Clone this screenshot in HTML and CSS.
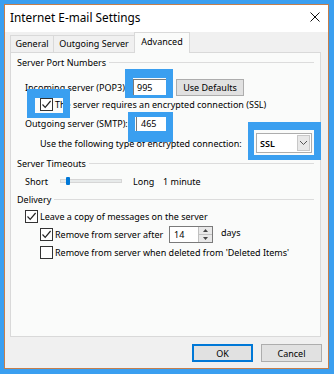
FILE: index.html
```html
<!DOCTYPE html>
<html>
<head>
<meta charset="utf-8">
<link rel="stylesheet" href="styles.css">
</head>
<body>
<div class="window">
  <div class="titlebar">
    <span class="title">Internet E-mail Settings</span>
    <svg class="close" width="10" height="10" viewBox="0 0 10 10"><path d="M0.5 0.5 L9.5 9.5 M9.5 0.5 L0.5 9.5" stroke="#111" stroke-width="1" fill="none"/></svg>
  </div>
  <div class="content">
    <div class="tabs">
      <div class="tab t-general">General</div>
      <div class="tab t-outgoing">Outgoing Server</div>
      <div class="tab t-advanced active">Advanced</div>
    </div>
    <div class="panel">
      <div class="group"><span>Server Port Numbers</span><i class="rule"></i></div>

      <div class="row r-in">
        <span class="lbl lbl-in">Incoming server (POP3):</span>
        <span class="field f-995">995</span>
        <span class="btn defaults">Use Defaults</span>
      </div>

      <div class="row r-ssl ind2">
        <span class="cb"><svg width="11" height="11" viewBox="0 0 11 11"><path d="M1.5 5.5 L4.2 8.3 L9.6 2" stroke="#222" stroke-width="1.2" fill="none"/></svg></span>
        <span class="cbtext">The server requires an encrypted connection (SSL)</span>
      </div>

      <div class="row r-out">
        <span class="lbl lbl-out">Outgoing server (SMTP):</span>
        <span class="field f-465">465</span>
      </div>

      <div class="row r-enc ind2">
        <span class="enc-lbl">Use the following type of encrypted connection:</span>
        <span class="select"><span class="sel-val">SSL</span><span class="sel-arrow"><svg width="9" height="6" viewBox="0 0 9 6"><path d="M1 1 L4.5 4.5 L8 1" stroke="#555" stroke-width="1" fill="none"/></svg></span></span>
      </div>

      <div class="group g2"><span>Server Timeouts</span><i class="rule"></i></div>

      <div class="row r-slider">
        <span class="short">Short</span>
        <span class="track"><span class="thumb"></span></span>
        <span class="long">Long</span>
        <span class="mins">1 minute</span>
      </div>

      <div class="group g3"><span>Delivery</span><i class="rule"></i></div>

      <div class="row r-leave">
        <span class="cb"><svg width="11" height="11" viewBox="0 0 11 11"><path d="M1.5 5.5 L4.2 8.3 L9.6 2" stroke="#222" stroke-width="1.2" fill="none"/></svg></span>
        <span class="cbtext">Leave a copy of messages on the server</span>
      </div>

      <div class="row r-after ind2">
        <span class="cb"><svg width="11" height="11" viewBox="0 0 11 11"><path d="M1.5 5.5 L4.2 8.3 L9.6 2" stroke="#222" stroke-width="1.2" fill="none"/></svg></span>
        <span class="cbtext after-lbl">Remove from server after</span>
        <span class="spin"><span class="spin-val">14</span><span class="spin-btns"><span class="sb"><svg width="5" height="3" viewBox="0 0 5 3"><path d="M0 3 L2.5 0 L5 3Z" fill="#444"/></svg></span><span class="sb"><svg width="5" height="3" viewBox="0 0 5 3"><path d="M0 0 L2.5 3 L5 0Z" fill="#444"/></svg></span></span></span>
        <span class="days">days</span>
      </div>

      <div class="row r-deleted ind2">
        <span class="cb"></span>
        <span class="cbtext">Remove from server when deleted from 'Deleted Items'</span>
      </div>
    </div>
    <div class="footer">
      <span class="btn ok">OK</span>
      <span class="btn cancel">Cancel</span>
    </div>
  </div>
</div>

<div class="hl hl1"></div>
<div class="hl hl2"></div>
<div class="hl hl3"></div>
<div class="hl hl4"></div>
</body>
</html>
```

FILE: styles.css
```css
* { box-sizing: border-box; }
html, body { margin: 0; padding: 0; }
body {
  width: 334px;
  height: 374px;
  overflow: hidden;
  position: relative;
  background: #3a9ff0;
  font-family: "Noto Sans", "Open Sans", sans-serif;
  font-size: 9px;
  color: #000;
}
.window {
  margin: 4px 0 0 4px;
  width: 325px;
  height: 365px;
  border: 1px solid #c47e4c;
  background: #f0f0f0;
  display: flex;
  flex-direction: column;
}
.titlebar {
  height: 27px;
  flex: none;
  background: #fff;
  display: flex;
  align-items: center;
  justify-content: space-between;
  padding: 0 8px 3px 5px;
}
.title { font-size: 11.8px; color: #000; }
.close { display: block; }

.content {
  flex: 1;
  display: flex;
  flex-direction: column;
  padding: 0 0 0 5px;
}
.tabs {
  height: 21px;
  display: flex;
  align-items: flex-end;
  margin-bottom: -1px;
  position: relative;
  z-index: 1;
}
.tab {
  height: 17px;
  margin-bottom: 1px;
  border: 1px solid #d9d9d9;
  border-bottom: none;
  background: #f0f0f0;
  display: flex;
  align-items: center;
  justify-content: center;
  padding-bottom: 1px;
}
.t-general { width: 44px; }
.t-outgoing { width: 82px; margin-left: -1px; }
.t-advanced { width: 56px; margin-left: -1px; }
.tab.active {
  height: 21px;
  margin-bottom: 0;
  background: #fafbfa;
  padding-bottom: 3px;
}

.panel {
  width: 311px;
  height: 285px;
  flex: none;
  border: 1px solid #d9d9d9;
  background: #fafbfa;
  padding: 1px 6px 0 6px;
}
.group {
  height: 16px;
  display: flex;
  align-items: center;
}
.rule {
  flex: 1;
  height: 1px;
  background: #dcdcdc;
  margin-left: 3px;
  margin-top: 1px;
}
.g2, .g3 { margin-top: 2px; }

.row {
  display: flex;
  align-items: center;
  height: 16px;
}
.ind2 { padding-left: 23px; }

.r-in { height: 18px; margin-top: 8px; padding-left: 8px; }
.lbl-in { width: 108px; }
.field {
  height: 17px;
  background: #fff;
  border: 1px solid #7a7a7a;
  display: flex;
  align-items: center;
  padding-left: 3px;
}
.f-995 { width: 34px; }
.btn {
  display: flex;
  align-items: center;
  justify-content: center;
  background: #e1e1e1;
  border: 1px solid #adadad;
}
.defaults { width: 68px; height: 17px; margin-left: 9px; }

.r-ssl { margin-top: 0; }
.cb {
  width: 13px;
  height: 13px;
  flex: none;
  border: 1px solid #333;
  background: #fff;
  display: flex;
  align-items: center;
  justify-content: center;
}
.cb svg { display: block; }
.cbtext { margin-left: 2px; }

.r-out { height: 18px; margin-top: 2px; padding-left: 8px; }
.lbl-out { width: 111px; }
.f-465 { width: 31px; padding-left: 4px; }

.r-enc { height: 20px; margin-top: 1px; }
.enc-lbl { width: 216px; }
.select {
  width: 56px;
  height: 20px;
  background: #fff;
  border: 1px solid #adadad;
  display: flex;
  align-items: center;
  justify-content: space-between;
  padding: 1px;
}
.sel-val { padding-left: 2px; font-weight: 600; }
.sel-arrow {
  width: 13px;
  height: 16px;
  background: #e8e8e8;
  border: 1px solid #c8c8c8;
  display: flex;
  align-items: center;
  justify-content: center;
}
.sel-arrow svg { display: block; }

.r-slider { margin-top: 2px; padding-left: 8px; }
.short { width: 35px; }
.track {
  width: 62px;
  height: 4px;
  background: #e7eaea;
  border: 1px solid #d6d6d6;
  position: relative;
  display: flex;
  align-items: center;
}
.thumb {
  width: 4px;
  height: 8px;
  background: #0078d7;
  margin-left: 5px;
  border-radius: 1px;
  flex: none;
}
.long { margin-left: 11px; width: 30px; }

.r-leave { margin-top: 1px; padding-left: 8px; }
.r-after { height: 18px; margin-top: 1px; }
.after-lbl { width: 114px; }
.spin {
  width: 44px;
  height: 17px;
  background: #fff;
  border: 1px solid #7a7a7a;
  display: flex;
  justify-content: space-between;
}
.spin-val { padding-left: 4px; display: flex; align-items: center; }
.spin-btns {
  width: 14px;
  display: flex;
  flex-direction: column;
  border-left: 1px solid #c0c0c0;
}
.sb {
  flex: 1;
  background: #e8e8e8;
  display: flex;
  align-items: center;
  justify-content: center;
}
.sb + .sb { border-top: 1px solid #c0c0c0; }
.sb svg { display: block; }
.days { margin-left: 8px; margin-top: -3px; }
.r-deleted { margin-top: 1px; }

.footer {
  display: flex;
  justify-content: flex-end;
  gap: 8px;
  padding-right: 6px;
  margin-top: 7px;
}
.footer .btn { width: 61px; height: 18px; }
.ok { border: 1px solid #0078d7; box-shadow: inset 0 0 0 1px #0078d7; }

.hl {
  position: absolute;
  border-style: solid;
  border-color: #3a9ff0;
}
.hl1 { left: 125px; top: 69px; width: 48px; height: 29px; border-width: 9px 7px 3px 8px; }
.hl2 { left: 27px; top: 89px; width: 43px; height: 29px; border-width: 9px 7px 5px 8px; }
.hl3 { left: 128px; top: 112px; width: 45px; height: 30px; border-width: 5px 7px 11px 7px; }
.hl4 { left: 248px; top: 122px; width: 73px; height: 38px; border-width: 8px 7px 5px 6px; }
```
